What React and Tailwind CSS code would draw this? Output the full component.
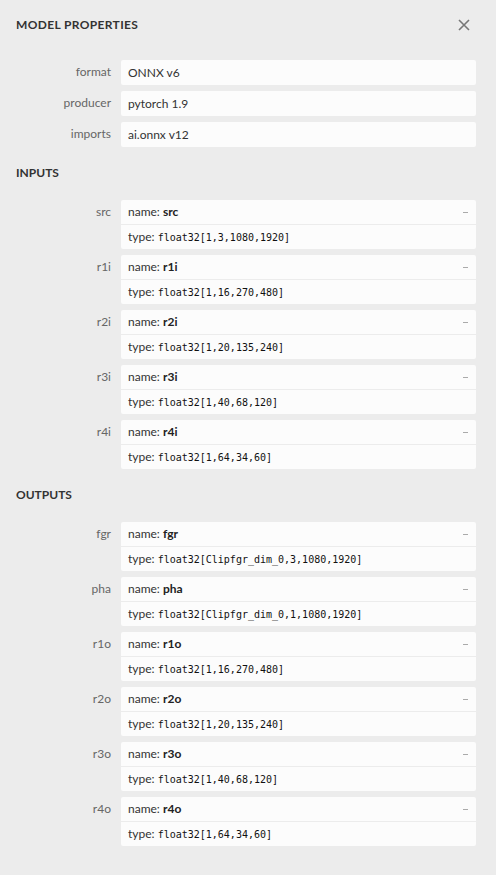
import React from 'react'

const SANS = { fontFamily: 'Lato, "Open Sans", sans-serif' }

const PROPS = [
  ['format', 'ONNX v6'],
  ['producer', 'pytorch 1.9'],
  ['imports', 'ai.onnx v12'],
]

const INPUTS = [
  ['src', 'float32[1,3,1080,1920]'],
  ['r1i', 'float32[1,16,270,480]'],
  ['r2i', 'float32[1,20,135,240]'],
  ['r3i', 'float32[1,40,68,120]'],
  ['r4i', 'float32[1,64,34,60]'],
]

const OUTPUTS = [
  ['fgr', 'float32[Clipfgr_dim_0,3,1080,1920]'],
  ['pha', 'float32[Clipfgr_dim_0,1,1080,1920]'],
  ['r1o', 'float32[1,16,270,480]'],
  ['r2o', 'float32[1,20,135,240]'],
  ['r3o', 'float32[1,40,68,120]'],
  ['r4o', 'float32[1,64,34,60]'],
]

function Label({ children }) {
  return (
    <div className="w-[101px] shrink-0 pr-[10px] text-right text-[12px] text-[#666] leading-[24px]">
      {children}
    </div>
  )
}

function PropRow({ name, value }) {
  return (
    <div className="flex">
      <Label>{name}</Label>
      <div className="flex-1 h-[25px] bg-[#fcfcfc] rounded-[2px] px-[7px] text-[12px] text-[#333] leading-[25px]">
        {value}
      </div>
    </div>
  )
}

function ArgRow({ name, type }) {
  return (
    <div className="flex">
      <Label>{name}</Label>
      <div className="flex-1 bg-[#fcfcfc] rounded-[2px] text-[12px] text-[#333]">
        <div className="flex items-center h-[25px] px-[7px] border-b border-[#ececec]">
          <span className="flex-1">
            name: <b className="font-bold text-[#222]">{name}</b>
          </span>
          <span className="w-[5px] h-px bg-[#aaa] mr-[1px]" />
        </div>
        <div className="flex items-center h-[24px] px-[7px]">
          type:&nbsp;
          <code
            className="text-[10px] text-[#111]"
            style={{ fontFamily: '"DejaVu Sans Mono", monospace' }}
          >
            {type}
          </code>
        </div>
      </div>
    </div>
  )
}

function Heading({ children }) {
  return (
    <div className="mt-[16px] mb-[17px] h-[20px] leading-[20px] pl-[16px] text-[12px] font-bold text-[#333] uppercase">
      {children}
    </div>
  )
}

export default function App() {
  return (
    <div className="w-[496px] min-h-[875px] bg-[#ececec]" style={SANS}>
      <div className="flex items-center justify-between h-[50px] pl-[16px] pr-[26px]">
        <div className="text-[12px] font-bold text-[#333] tracking-[0.35px]">MODEL PROPERTIES</div>
        <svg width="12" height="12" viewBox="0 0 12 12">
          <path d="M1 1 L11 11 M11 1 L1 11" stroke="#777" strokeWidth="1.6" />
        </svg>
      </div>

      <div className="mt-[10px] pl-[20px] pr-[20px] flex flex-col gap-[6px]">
        {PROPS.map(([n, v]) => (
          <PropRow key={n} name={n} value={v} />
        ))}
      </div>

      <Heading>Inputs</Heading>
      <div className="pl-[20px] pr-[20px] flex flex-col gap-[6px]">
        {INPUTS.map(([n, t]) => (
          <ArgRow key={n} name={n} type={t} />
        ))}
      </div>

      <Heading>Outputs</Heading>
      <div className="pl-[20px] pr-[20px] flex flex-col gap-[6px]">
        {OUTPUTS.map(([n, t]) => (
          <ArgRow key={n} name={n} type={t} />
        ))}
      </div>
    </div>
  )
}
